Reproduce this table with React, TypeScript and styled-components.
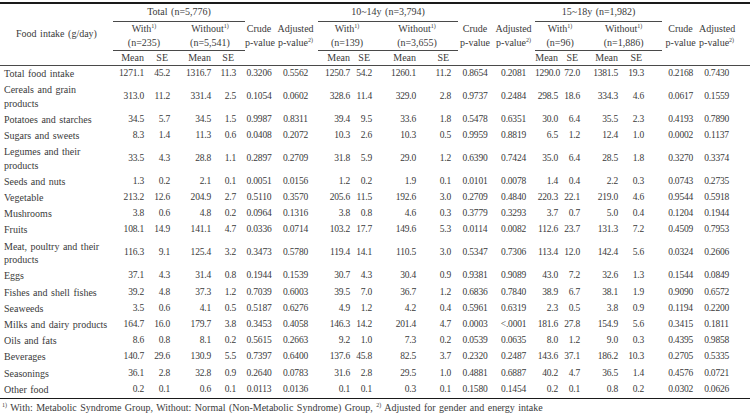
import React from 'react'
import styled, { createGlobalStyle } from 'styled-components'

const GlobalStyle = createGlobalStyle`
  html, body {
    margin: 0;
    padding: 0;
    background: #ffffff;
  }
`

interface ColSpec {
  w: number
  pr?: number // right-aligned numbers get a right padding, p-values are centred
  hpr?: number
}

// 19 columns: name, then 3 groups of Mean/SE/Mean/SE/Crude/Adjusted
const cols: ColSpec[] = [
  { w: 113 },
  { w: 37, pr: 6 },
  { w: 25, pr: 5 },
  { w: 40, pr: 4 },
  { w: 30, pr: 9 },
  { w: 28 },
  { w: 45 },
  { w: 34, pr: 2 },
  { w: 24, pr: 4 },
  { w: 44, pr: 4 },
  { w: 38, pr: 7 },
  { w: 34 },
  { w: 43 },
  { w: 25, pr: 2 },
  { w: 25, pr: 5 },
  { w: 37, pr: 4 },
  { w: 40, pr: 18 },
  { w: 37 },
  { w: 51, hpr: 16 }
]

interface Row {
  name: string[]
  v: string[]
}

const rows: Row[] = [
  { name: ['Total food intake'], v: ['1271.1', '45.2', '1316.7', '11.3', '0.3206', '0.5562', '1250.7', '54.2', '1260.1', '11.2', '0.8654', '0.2081', '1290.0', '72.0', '1381.5', '19.3', '0.2168', '0.7430'] },
  { name: ['Cereals and grain', 'products'], v: ['313.0', '11.2', '331.4', '2.5', '0.1054', '0.0602', '328.6', '11.4', '329.0', '2.8', '0.9737', '0.2484', '298.5', '18.6', '334.3', '4.6', '0.0617', '0.1559'] },
  { name: ['Potatoes and starches'], v: ['34.5', '5.7', '34.5', '1.5', '0.9987', '0.8311', '39.4', '9.5', '33.6', '1.8', '0.5478', '0.6351', '30.0', '6.4', '35.5', '2.3', '0.4193', '0.7890'] },
  { name: ['Sugars and sweets'], v: ['8.3', '1.4', '11.3', '0.6', '0.0408', '0.2072', '10.3', '2.6', '10.3', '0.5', '0.9959', '0.8819', '6.5', '1.2', '12.4', '1.0', '0.0002', '0.1137'] },
  { name: ['Legumes and their', 'products'], v: ['33.5', '4.3', '28.8', '1.1', '0.2897', '0.2709', '31.8', '5.9', '29.0', '1.2', '0.6390', '0.7424', '35.0', '6.4', '28.5', '1.8', '0.3270', '0.3374'] },
  { name: ['Seeds and nuts'], v: ['1.3', '0.2', '2.1', '0.1', '0.0051', '0.0156', '1.2', '0.2', '1.9', '0.1', '0.0101', '0.0078', '1.4', '0.4', '2.2', '0.3', '0.0743', '0.2735'] },
  { name: ['Vegetable'], v: ['213.2', '12.6', '204.9', '2.7', '0.5110', '0.3570', '205.6', '11.5', '192.6', '3.0', '0.2709', '0.4840', '220.3', '22.1', '219.0', '4.6', '0.9544', '0.5918'] },
  { name: ['Mushrooms'], v: ['3.8', '0.6', '4.8', '0.2', '0.0964', '0.1316', '3.8', '0.8', '4.6', '0.3', '0.3779', '0.3293', '3.7', '0.7', '5.0', '0.4', '0.1204', '0.1944'] },
  { name: ['Fruits'], v: ['108.1', '14.9', '141.1', '4.7', '0.0336', '0.0714', '103.2', '17.7', '149.6', '5.3', '0.0114', '0.0082', '112.6', '23.7', '131.3', '7.2', '0.4509', '0.7953'] },
  { name: ['Meat, poultry and their', 'products'], v: ['116.3', '9.1', '125.4', '3.2', '0.3473', '0.5780', '119.4', '14.1', '110.5', '3.0', '0.5347', '0.7306', '113.4', '12.0', '142.4', '5.6', '0.0324', '0.2606'] },
  { name: ['Eggs'], v: ['37.1', '4.3', '31.4', '0.8', '0.1944', '0.1539', '30.7', '4.3', '30.4', '0.9', '0.9381', '0.9089', '43.0', '7.2', '32.6', '1.3', '0.1544', '0.0849'] },
  { name: ['Fishes and shell fishes'], v: ['39.2', '4.8', '37.3', '1.2', '0.7039', '0.6003', '39.5', '7.0', '36.7', '1.2', '0.6836', '0.7840', '38.9', '6.7', '38.1', '1.9', '0.9090', '0.6572'] },
  { name: ['Seaweeds'], v: ['3.5', '0.6', '4.1', '0.5', '0.5187', '0.6276', '4.9', '1.2', '4.2', '0.4', '0.5961', '0.6319', '2.3', '0.5', '3.8', '0.9', '0.1194', '0.2200'] },
  { name: ['Milks and dairy products'], v: ['164.7', '16.0', '179.7', '3.8', '0.3453', '0.4058', '146.3', '14.2', '201.4', '4.7', '0.0003', '<.0001', '181.6', '27.8', '154.9', '5.6', '0.3415', '0.1811'] },
  { name: ['Oils and fats'], v: ['8.6', '0.8', '8.1', '0.2', '0.5615', '0.2663', '9.2', '1.0', '7.3', '0.2', '0.0539', '0.0635', '8.0', '1.2', '9.0', '0.3', '0.4395', '0.9858'] },
  { name: ['Beverages'], v: ['140.7', '29.6', '130.9', '5.5', '0.7397', '0.6400', '137.6', '45.8', '82.5', '3.7', '0.2320', '0.2487', '143.6', '37.1', '186.2', '10.3', '0.2705', '0.5335'] },
  { name: ['Seasonings'], v: ['36.1', '2.8', '32.8', '0.9', '0.2640', '0.0783', '31.6', '2.8', '29.5', '1.0', '0.4881', '0.6887', '40.2', '4.7', '36.5', '1.4', '0.4576', '0.0721'] },
  { name: ['Other food'], v: ['0.2', '0.1', '0.6', '0.1', '0.0113', '0.0136', '0.1', '0.1', '0.3', '0.1', '0.1580', '0.1454', '0.2', '0.1', '0.8', '0.2', '0.0302', '0.0626'] }
]

const groups = [
  { title: 'Total (n=5,776)', withN: '(n=235)', withoutN: '(n=5,541)' },
  { title: '10~14y (n=3,794)', withN: '(n=139)', withoutN: '(n=3,655)' },
  { title: '15~18y (n=1,982)', withN: '(n=96)', withoutN: '(n=1,886)' }
]

const Page = styled.div`
  width: 750px;
  height: 413px;
  overflow: hidden;
  font-family: 'Liberation Serif', 'DejaVu Serif', serif;
  font-size: 10px;
  word-spacing: 1px;
  color: #3a3a3a;
`

const Table = styled.table`
  width: 750px;
  margin-top: 2px;
  border-collapse: collapse;
  table-layout: fixed;
  border-top: 2px solid #1a1a1a;
  border-bottom: 1.5px solid #1a1a1a;
`

const HeadRow = styled.tr<{ $h: number }>`
  height: ${(p) => p.$h}px;
`

const Head = styled.th<{ $line?: boolean; $pr?: number }>`
  padding: 0 ${(p) => p.$pr ?? 0}px 0 0;
  font-weight: normal;
  text-align: center;
  vertical-align: middle;
  line-height: 14px;
  white-space: nowrap;
  border-bottom: ${(p) => (p.$line ? '1px solid #4a4a4a' : 'none')};
`

const Label = styled.th<{ $pr?: number }>`
  padding: 0 ${(p) => p.$pr ?? 0}px 0 0;
  font-weight: normal;
  text-align: ${(p) => (p.$pr !== undefined ? 'right' : 'center')};
  vertical-align: middle;
  line-height: 14px;
  white-space: nowrap;
  border-bottom: 1px solid #4a4a4a;
`

const Sup = styled.sup`
  font-size: 6px;
  line-height: 0;
  vertical-align: 4px;
`

const Cell = styled.td<{ $pr?: number; $cpr?: number }>`
  padding: 1.3px ${(p) => p.$pr ?? p.$cpr ?? 0}px 1.3px 0;
  font-size: 9.5px;
  letter-spacing: -0.2px;
  line-height: 13.6px;
  text-align: ${(p) => (p.$pr !== undefined ? 'right' : 'center')};
  vertical-align: middle;
  white-space: nowrap;
`

const NameCell = styled.td`
  padding: 1.3px 0 1.3px 4px;
  line-height: 13.6px;
  text-align: left;
  vertical-align: middle;
  white-space: nowrap;
`

const Note = styled.p`
  margin: 0;
  padding: 3px 0 0 2px;
  line-height: 12px;
  white-space: nowrap;
`

export default function App() {
  return (
    <Page>
      <GlobalStyle />
      <Table>
        <colgroup>
          {cols.map((c, i) => (
            <col key={i} style={{ width: c.w }} />
          ))}
        </colgroup>
        <thead>
          <HeadRow $h={18}>
            <Label rowSpan={3}>Food intake (g/day)</Label>
            {groups.map((g) => (
              <React.Fragment key={g.title}>
                <Head colSpan={4} $line>
                  {g.title}
                </Head>
                <Head colSpan={2} />
              </React.Fragment>
            ))}
          </HeadRow>
          <HeadRow $h={29}>
            {groups.map((g, gi) => (
              <React.Fragment key={g.title}>
                <Head colSpan={2} $line>
                  With<Sup>1)</Sup>
                  <br />
                  {g.withN}
                </Head>
                <Head colSpan={2} $line>
                  Without<Sup>1)</Sup>
                  <br />
                  {g.withoutN}
                </Head>
                <Head>
                  Crude
                  <br />
                  p-value
                </Head>
                <Head $pr={cols[gi * 6 + 6].hpr}>
                  Adjusted
                  <br />
                  p-value<Sup>2)</Sup>
                </Head>
              </React.Fragment>
            ))}
          </HeadRow>
          <HeadRow $h={14}>
            {groups.map((g, gi) => (
              <React.Fragment key={g.title}>
                <Label $pr={cols[gi * 6 + 1].pr}>Mean</Label>
                <Label $pr={(cols[gi * 6 + 2].pr ?? 0) + 2}>SE</Label>
                <Label $pr={cols[gi * 6 + 3].pr}>Mean</Label>
                <Label $pr={(cols[gi * 6 + 4].pr ?? 0) + 2}>SE</Label>
                <Label />
                <Label />
              </React.Fragment>
            ))}
          </HeadRow>
        </thead>
        <tbody>
          {rows.map((r) => (
            <tr key={r.name.join(' ')}>
              <NameCell>
                {r.name.map((n, i) => (
                  <React.Fragment key={n}>
                    {i > 0 && <br />}
                    {n}
                  </React.Fragment>
                ))}
              </NameCell>
              {r.v.map((v, i) => (
                <Cell key={i} $pr={cols[i + 1].pr} $cpr={cols[i + 1].hpr}>
                  {v}
                </Cell>
              ))}
            </tr>
          ))}
        </tbody>
      </Table>
      <Note>
        <Sup>1)</Sup> With: Metabolic Syndrome Group, Without: Normal (Non-Metabolic Syndrome) Group, <Sup>2)</Sup> Adjusted
        for gender and energy intake
      </Note>
    </Page>
  )
}
